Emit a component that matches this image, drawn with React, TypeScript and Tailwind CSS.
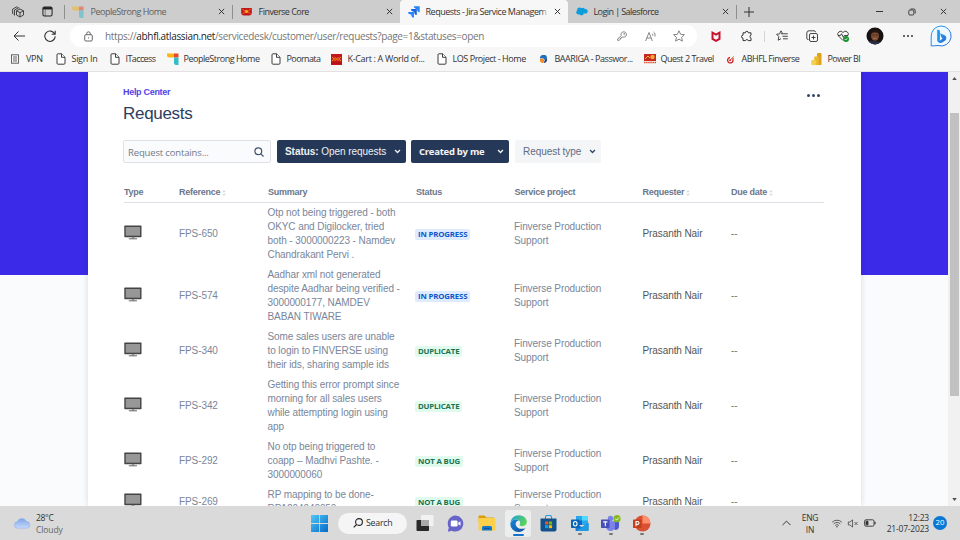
import React from "react";

type P = { className?: string };

const ui = "font-['Open_Sans','Noto_Sans',sans-serif]";

/* ---------- small glyphs ---------- */
const X = ({ className = "" }: P) => (
  <svg viewBox="0 0 8 8" className={`size-[7px] shrink-0 ${className}`} fill="none" stroke="#333" strokeWidth="1.1">
    <path d="M1 1l6 6M7 1L1 7" />
  </svg>
);
const FileIcon = () => (
  <svg viewBox="0 0 10 12" className="h-3 w-[10px] shrink-0" fill="#fff" stroke="#3c3c3c" strokeWidth="1" strokeLinejoin="round">
    <path d="M2 .8h3.600L9 4.200v6a1 1 0 0 1-1 1H2a1 1 0 0 1-1-1V1.800a1 1 0 0 1 1-1z" />
    <path d="M5.500.8v3.500H9" />
  </svg>
);
const PeopleStrong = ({ className = "" }: P) => (
  <svg viewBox="0 0 12 12" className={`size-3 shrink-0 ${className}`}>
    <path d="M0 .5h7V4.500H2.500A2.500 2.500 0 0 1 0 2z" fill="#fbb316" />
    <path d="M7 .5h4.500v4H7z" fill="#e8452c" />
    <path d="M7 4.500h4.500V12H9A2 2 0 0 1 7 10z" fill="#35bccb" />
  </svg>
);
const Birla = () => (
  <svg viewBox="0 0 12 9" className="h-[8px] w-[11px] shrink-0">
    <path d="M0 0h12v6a3 3 0 0 1-3 2.500H3A3 3 0 0 1 0 6z" fill="#c3161c" />
    <circle cx="6" cy="4" r="1.900" fill="#f6a11a" />
    <path d="M1.500 1.500l2.500 1.800M10.500 1.500L8 3.300M1.500 6.500L4 5M10.500 6.500L8 5" stroke="#f6a11a" strokeWidth=".8" />
  </svg>
);
const KCart = () => (
  <svg viewBox="0 0 12 12" className="size-[11px] shrink-0">
    <rect width="12" height="12" fill="#c4161c" />
    <path d="M1 3.500l3 2L1 7.500M11 3.500l-3 2 3 2M4 3.500l2 2 2-2M4 7.500l2-2 2 2" stroke="#f0a020" fill="none" />
    <path d="M0 10h12" stroke="#a81015" />
  </svg>
);
const Baariga = () => (
  <svg viewBox="0 0 10 10" className="size-[9px] shrink-0">
    <path d="M1 4A4 4 0 0 1 9 3.500L7 6 4.500 3.500z" fill="#1f6fc0" />
    <path d="M1 4.500L4.500 3.800 6 6 4.500 9A4 4 0 0 1 1 4.500z" fill="#f28a1c" />
    <path d="M9 4a4.200 4.200 0 0 1-4 5l1.500-3z" fill="#17386f" />
  </svg>
);
const Quest = () => (
  <svg viewBox="0 0 12 10" className="h-[10px] w-3 shrink-0">
    <rect y="0" width="12" height="7" fill="#c5281c" />
    <circle cx="8.500" cy="3" r="2.200" fill="#f3a63a" />
    <path d="M1 5l3-3 2 2" stroke="#f7b63a" fill="none" />
    <path d="M0 8.500h12" stroke="#d9502c" strokeWidth="1.400" strokeDasharray="1.500 .6" />
  </svg>
);
const Abhfl = () => (
  <svg viewBox="0 0 10 10" className="size-[9px] shrink-0" fill="none">
    <path d="M7.500 4.500A3 3 0 1 1 4.500 2.800" stroke="#d5222a" strokeWidth="1.500" />
    <path d="M4 6.500L8.500 1.500M6 4l3-.5" stroke="#e56a2c" />
    <circle cx="4.600" cy="5.700" r="1" fill="#d5222a" />
  </svg>
);
const PowerBI = () => (
  <svg viewBox="0 0 11 12" className="h-3 w-[11px] shrink-0">
    <rect x="6" y="0" width="4.500" height="12" rx=".8" fill="#dca21c" />
    <rect x="3.200" y="3.500" width="4.500" height="8.500" rx=".8" fill="#ecb92a" />
    <rect x=".3" y="7" width="4.500" height="5" rx=".8" fill="#f5d050" />
  </svg>
);
const VpnIcon = () => (
  <svg viewBox="0 0 10 10" className="size-[10px] shrink-0" fill="none" stroke="#555" strokeWidth=".9">
    <rect x="1.500" y=".8" width="7" height="8.400" />
    <path d="M3 3h4M3 5h4M3 7h4" />
  </svg>
);
const Jira = () => (
  <svg viewBox="0 0 12 12" className="size-3 shrink-0">
    <path d="M5.800.3H11.700V6.200A2.600 2.600 0 0 1 9.100 3.900V2.900H8.200A2.600 2.600 0 0 1 5.800.3z" fill="#2684ff" />
    <path d="M2.900 3.100H8.800V9A2.600 2.600 0 0 1 6.200 6.700V5.700H5.300A2.600 2.600 0 0 1 2.900 3.100z" fill="#1565e0" />
    <path d="M0 5.900H5.900V11.800A2.600 2.600 0 0 1 3.300 9.500V8.500H2.400A2.600 2.600 0 0 1 0 5.900z" fill="#2684ff" />
  </svg>
);
const Salesforce = () => (
  <svg viewBox="0 0 12 9" className="h-[9px] w-3 shrink-0" fill="#0d9dda">
    <circle cx="3.600" cy="3" r="2.500" />
    <circle cx="6.800" cy="3" r="2.200" />
    <circle cx="9.300" cy="4.300" r="2.400" />
    <circle cx="2.600" cy="5.200" r="2.300" />
    <circle cx="5.500" cy="6" r="2.400" />
  </svg>
);

/* ---------- browser chrome ---------- */
function Tab({ icon, label, width, className, tracking }: { icon: React.ReactNode; label: string; width: string; className?: string; tracking: string }) {
  return (
    <div className={`flex h-full shrink-0 items-center pl-2 pr-[7px] ${width} ${className ?? ""}`}>
      <div className="flex w-[17.5px] shrink-0 items-center">{icon}</div>
      <span className={`min-w-0 flex-1 overflow-hidden whitespace-nowrap ${tracking}`}>{label}</span>
      <X className="ml-1" />
    </div>
  );
}
const Sep = () => <div className="h-[14px] w-px shrink-0 bg-[#8f8f8f]" />;

function TabBar() {
  return (
    <div className="flex h-[23px] shrink-0 items-center bg-[#cdcdcd] text-[9px] text-[#333]">
      <div className="flex w-16 shrink-0 items-center pl-3">
        <svg viewBox="0 0 12 12" className="size-3" fill="none" stroke="#333" strokeWidth=".9" strokeLinejoin="round">
          <path d="M4.500 4.800L8 3l3.500 1.800v4.200L8 11 4.500 9zM4.500 4.800L8 6.600l3.500-1.800M8 6.600V11" />
          <path d="M3 9.500L2.500 9.200V4L6.500 1.800l1 .4M1.500 8.200L.6 7.600V3.200L4.600.9l1.200.5" />
        </svg>
        <svg viewBox="0 0 12 12" className="ml-[18px] size-[11px]" fill="none" stroke="#222" strokeWidth="1.100">
          <rect x="1" y="1" width="10" height="10" rx="1.600" />
          <path d="M1 2.500h10" strokeWidth="2.600" />
          <path d="M3.500 4v7" strokeWidth=".5" />
        </svg>
      </div>
      <Sep />
      <Tab icon={<PeopleStrong className="-ml-px opacity-50" />} label="PeopleStrong Home" width="w-[167px]" className="text-[#606060]" tracking="tracking-[-0.5px]" />
      <Sep />
      <Tab icon={<Birla />} label="Finverse Core" width="w-[167px]" tracking="tracking-[-0.52px]" />
      <div className="relative flex h-full w-[168px] shrink-0 items-center rounded-t-[4px] bg-[#f7f7f7]">
        <Tab icon={<Jira />} label="Requests - Jira Service Managem" width="w-[168px]" tracking="tracking-[-0.48px]" />
        <div className="absolute right-[19px] h-4 w-2 bg-linear-to-r from-[#f7f7f700] to-[#f7f7f7]" />
      </div>
      <Tab icon={<Salesforce />} label="Login | Salesforce" width="w-[168px]" tracking="tracking-[-0.58px]" />
      <Sep />
      <svg viewBox="0 0 10 10" className="ml-[7px] size-[10px]" stroke="#333" strokeWidth="1">
        <path d="M5 0v10M0 5h10" />
      </svg>
      <div className="ml-auto flex items-center pr-[13px]">
        <div className="mr-px h-px w-[7px] bg-[#333]" />
        <svg viewBox="0 0 8 8" className="ml-6 size-2" fill="none" stroke="#333" strokeWidth=".9">
          <rect x=".8" y="2" width="5" height="5" rx="1" />
          <path d="M2.500 1h3.300A1.400 1.400 0 0 1 7.200 2.400V5.500" />
        </svg>
        <X className="ml-6 size-2" />
      </div>
    </div>
  );
}

function Toolbar() {
  return (
    <div className="flex h-[27px] shrink-0 items-center bg-[#f7f7f7] pb-px">
      <svg viewBox="0 0 12 10" className="ml-[13px] h-[10px] w-3" fill="none" stroke="#333" strokeWidth="1">
        <path d="M12 5H1M5.500.5L1 5l4.500 4.500" />
      </svg>
      <svg viewBox="0 0 12 12" className="ml-[19px] size-3" fill="none" stroke="#333" strokeWidth="1.100">
        <path d="M10.800 4.200A5.200 5.200 0 1 0 11.200 6.200M11.200.8V4.300H7.700" />
      </svg>
      <div className="ml-[14px] flex h-[22px] w-[627px] items-center rounded-full bg-white pl-[14px]">
        <svg viewBox="0 0 10 12" className="h-[11px] w-[9px] shrink-0" fill="none" stroke="#555" strokeWidth="1">
          <rect x=".8" y="4" width="8.400" height="7" rx="1.200" />
          <path d="M3 4V2.800a2 2 0 0 1 4 0V4" />
          <circle cx="5" cy="7.500" r=".6" fill="#555" stroke="none" />
        </svg>
        <span className="ml-[12px] w-[512px] whitespace-nowrap text-[10px] tracking-[-0.345px] text-[#767676]">
          https://<span className="text-[#222]">abhfl.atlassian.net</span>/servicedesk/customer/user/requests?page=1&amp;statuses=open
        </span>
        <svg viewBox="0 0 10 10" className="size-[10px] shrink-0" fill="none" stroke="#777" strokeWidth=".9">
          <path d="M4.200 4.500A2.700 2.700 0 1 1 5.700 6L5 6.600H4v1H3v1L2.300 9.300H.7V8z" />
          <circle cx="7.200" cy="2.900" r=".5" />
        </svg>
        <svg viewBox="0 0 12 11" className="ml-[18px] h-[11px] w-3 shrink-0" fill="none" stroke="#777" strokeWidth=".9">
          <path d="M.6 10L4 1.500 7.400 10M1.800 7h4.400M7 2.500c.8.500 1 1.500.7 2.300M8.500 1c1.600 1 2 2.800 1.300 4.500" />
        </svg>
        <svg viewBox="0 0 12 12" className="ml-[16px] size-3 shrink-0" fill="none" stroke="#777" strokeWidth=".9" strokeLinejoin="round">
          <path d="M6 .8l1.600 3.500 3.800.4-2.800 2.600.8 3.800L6 9.200l-3.400 1.900.8-3.800L.6 4.700l3.800-.4z" />
        </svg>
      </div>
      <svg viewBox="0 0 10 11" className="ml-[14px] h-[11px] w-[10px] shrink-0" fill="#c8102e">
        <path d="M.5 0L5 2.600 9.500 0V8.500L5 11 .5 8.500zM2.500 3.300V7.300L5 8.700l2.500-1.400V3.300L5 4.800z" fillRule="evenodd" />
      </svg>
      <svg viewBox="0 0 12 12" className="ml-[20px] size-3 shrink-0" fill="none" stroke="#333" strokeWidth="1" strokeLinejoin="round">
        <path d="M2 2.800h2.300a1.500 1.500 0 0 1 3 0H10V5.200a1.400 1.400 0 0 0 0 2.700v2.700H7.200a1.400 1.400 0 0 0-2.700 0H2V8.200a1.500 1.500 0 0 1 0-3z" />
      </svg>
      <div className="ml-[11px] h-[11px] w-px bg-[#d4d4d4]" />
      <svg viewBox="0 0 12 12" className="ml-[11px] size-3 shrink-0" fill="none" stroke="#333" strokeWidth=".9" strokeLinejoin="round">
        <path d="M6.500 3.500L5 .8 3.600 3.900.6 4.300l2.200 2.200-.6 3.700 2.800-1.500M5 3.800h6.800M6.500 6.300h5.300M7 8.800h4.800" />
      </svg>
      <svg viewBox="0 0 12 12" className="ml-[18px] size-3 shrink-0" fill="none" stroke="#333" strokeWidth=".9">
        <rect x="3.500" y="3.500" width="8" height="8" rx="1.500" />
        <path d="M7.500 5.500v4M5.500 7.500h4M2.500 9.500A1.500 1.500 0 0 1 .8 8V3A2.200 2.200 0 0 1 3 .8h5A1.500 1.500 0 0 1 9.500 2.200" />
      </svg>
      <svg viewBox="0 0 12 12" className="ml-[19px] size-3 shrink-0" fill="none" stroke="#333" strokeWidth=".9" strokeLinejoin="round">
        <path d="M6 10.500L1.300 5.800A2.700 2.700 0 0 1 6 2.500a2.700 2.700 0 0 1 4.800 3.200M1 5.500h2.500l1-1.800 1.800 3.500 1-1.700H11" />
        <circle cx="9" cy="9" r="3" fill="#17942e" stroke="none" />
        <path d="M7.700 9l1 1 1.700-1.800" stroke="#fff" strokeWidth=".8" />
      </svg>
      <svg viewBox="0 0 18 18" className="ml-[17px] size-[18px] shrink-0">
        <defs><clipPath id="face"><circle cx="9" cy="9" r="8.500" /></clipPath></defs>
        <g clipPath="url(#face)">
          <rect width="18" height="18" fill="#19110f" />
          <ellipse cx="9" cy="9" rx="4" ry="4.800" fill="#7a4b32" />
          <path d="M4.800 6.500c0-5 8.400-5 8.400 0-1-1.500-7.400-1.500-8.400 0z" fill="#211512" />
          <path d="M6.600 8h1.600M9.900 8h1.600" stroke="#2b1610" strokeWidth=".8" />
          <path d="M1 18c1-5 5-5 7-3.500 3 .5 6-1.500 8 3.500z" fill="#282f47" />
          <path d="M7.500 11.300c.8.500 2.200.5 3 0" stroke="#c29272" strokeWidth=".7" fill="none" />
        </g>
      </svg>
      <div className="ml-[19px] flex gap-[2px]">
        <div className="size-[2px] rounded-full bg-[#333]" />
        <div className="size-[2px] rounded-full bg-[#333]" />
        <div className="size-[2px] rounded-full bg-[#333]" />
      </div>
      <svg viewBox="0 0 22 22" className="ml-[16.500px] size-[22px] shrink-0">
        <defs>
          <linearGradient id="bing" x1="0" y1="0" x2="1" y2="1">
            <stop offset="0" stopColor="#27a7ef" /><stop offset="1" stopColor="#2a63d8" />
          </linearGradient>
        </defs>
        <path d="M11 1a10 10 0 1 1-3 19.500L1.200 21V11A10 10 0 0 1 11 1z" fill="#eef8ff" stroke="url(#bing)" strokeWidth="1" />
        <path d="M7.200 4.500l2.700.9v8l-.2 3-2.500-1.500z" fill="#2196e8" />
        <path d="M10 8.200l4.700 2.100a3.200 3.200 0 0 1 .5 5.200l-3 2c-1.500.8-3.700.4-4.700-1.200l-.3-1.500 2.700 1 2.600-2.300-1.300-1.400z" fill="url(#bing)" />
      </svg>
    </div>
  );
}

const bookmarks: [React.ReactNode, string, string, string][] = [
  [<VpnIcon />, "VPN", "w-[45.5px]", "tracking-[-0.3px]"],
  [<FileIcon />, "Sign In", "w-[54px]", "tracking-[-0.3px]"],
  [<FileIcon />, "ITaccess", "w-[58px]", "tracking-[-0.6px]"],
  [<PeopleStrong />, "PeopleStrong Home", "w-[103px]", "tracking-[-0.48px]"],
  [<FileIcon />, "Poornata", "w-[61px]", "tracking-[-0.6px]"],
  [<KCart />, "K-Cart : A World of...", "w-[105px]", "tracking-[-0.32px]"],
  [<FileIcon />, "LOS Project - Home", "w-[102px]", "tracking-[-0.45px]"],
  [<Baariga />, "BAARIGA - Passwor...", "w-[106px]", "tracking-[-0.45px]"],
  [<Quest />, "Quest 2 Travel", "w-[81px]", "tracking-[-0.5px]"],
  [<Abhfl />, "ABHFL Finverse", "w-[86px]", "tracking-[-0.5px]"],
  [<PowerBI />, "Power BI", "w-[50px]", "tracking-[-0.55px]"],
];

function Bookmarks() {
  return (
    <div className="flex h-[22px] shrink-0 items-center border-b border-[#e2e2e2] bg-[#f7f7f7] pb-[3px] pl-[9px] text-[9px] text-[#333]">
      {bookmarks.map(([icon, label, width, tracking]) => (
        <div key={label} className={`flex shrink-0 items-center whitespace-nowrap ${width}`}>
          <div className="flex w-[17px] shrink-0 items-center justify-center pr-[5px]">{icon}</div>
          <span className={tracking}>{label}</span>
        </div>
      ))}
    </div>
  );
}

/* ---------- requests page ---------- */
const Chevron = ({ className = "" }: P) => (
  <svg viewBox="0 0 8 5" className={`h-[5px] w-[7px] shrink-0 ${className}`} fill="none" stroke="currentColor" strokeWidth="1.500">
    <path d="M1.200.8L4 3.600 6.800.8" />
  </svg>
);
const Sort = () => (
  <svg viewBox="0 0 4 6" className="ml-[2px] h-[6px] w-1" fill="#d5d9df">
    <path d="M2 0l1.800 2.200H.2zM2 6L.2 3.800h3.600z" />
  </svg>
);
const Monitor = () => (
  <svg viewBox="0 0 18 15" className="h-[15px] w-[18px]">
    <rect x=".3" y=".6" width="17.200" height="11.600" rx=".6" fill="#444" />
    <rect x="1.700" y="2" width="14.400" height="8.700" fill="#979797" />
    <path d="M7.600 12.200h2.800v1.300H7.600z" fill="#888" />
    <path d="M4.800 13.300h8.200v1H4.800z" fill="#666" />
  </svg>
);

const rows: { id: string; lines: string[]; status: string; tone: "blue" | "green" }[] = [
  { id: "FPS-650", lines: ["Otp not being triggered - both", "OKYC and Digilocker, tried", "both - 3000000223 - Namdev", "Chandrakant Pervi ."], status: "IN PROGRESS", tone: "blue" },
  { id: "FPS-574", lines: ["Aadhar xml not generated", "despite Aadhar being verified -", "3000000177, NAMDEV", "BABAN TIWARE"], status: "IN PROGRESS", tone: "blue" },
  { id: "FPS-340", lines: ["Some sales users are unable", "to login to FINVERSE using", "their ids, sharing sample ids"], status: "DUPLICATE", tone: "green" },
  { id: "FPS-342", lines: ["Getting this error prompt since", "morning for all sales users", "while attempting login using", "app"], status: "DUPLICATE", tone: "green" },
  { id: "FPS-292", lines: ["No otp being triggered to", "coapp – Madhvi Pashte. -", "3000000060"], status: "NOT A BUG", tone: "green" },
  { id: "FPS-269", lines: ["RP mapping to be done-", "RPA204040050"], status: "NOT A BUG", tone: "green" },
];

const cols = "grid grid-cols-[55px_89px_148px_98px_128px_89px_93px]";

function RequestsPage() {
  return (
    <div className="flex min-h-0 flex-1 overflow-hidden bg-linear-to-b from-[#3b2ae8] from-[203.500px] to-[#fafbfd] to-[203.500px] font-['Liberation_Sans',Arial,sans-serif]">
      <main className="ml-[88px] h-full w-[773px] shrink-0 overflow-hidden bg-white pl-[35px] pr-[37px] shadow-[0_0_6px_rgba(30,30,80,0.15)]">
        <div className="flex items-start justify-between pt-[14px]">
          <div>
            <a className="block text-[9px] font-bold leading-3 tracking-[-0.3px] text-[#5243e9]">Help Center</a>
            <h1 className="mt-[6px] text-[17px] leading-5 tracking-[-0.3px] text-[#2c3e5d]">Requests</h1>
          </div>
          <div className="mr-[4px] mt-[8px] flex gap-[2px]">
            <div className="size-[3px] rounded-full bg-[#344563]" />
            <div className="size-[3px] rounded-full bg-[#344563]" />
            <div className="size-[3px] rounded-full bg-[#344563]" />
          </div>
        </div>
        <div className="mt-4 flex h-[23px] items-stretch">
          <div className="flex w-[148px] items-center justify-between rounded-[2px] border border-[#dfe1e6] bg-[#fafbfc] pl-[4px] pr-[6px]">
            <span className={`pt-[3px] text-[9.500px] tracking-[-0.15px] text-[#707a8b] ${ui}`}>Request contains...</span>
            <svg viewBox="0 0 10 10" className="size-[10px]" fill="none" stroke="#44546f" strokeWidth="1.200">
              <circle cx="4.300" cy="4.300" r="3.400" /><path d="M6.800 6.800l2.700 2.700" />
            </svg>
          </div>
          <div className="ml-[6px] flex w-[129px] items-center justify-between rounded-[2px] bg-[#253858] pl-2 pr-[5px] text-[10px] text-[#eef0f3]">
            <span className="whitespace-nowrap tracking-[-0.05px]"><b>Status:</b> Open requests</span><Chevron />
          </div>
          <div className="ml-[5px] flex w-[98px] items-center justify-between rounded-[2px] bg-[#253858] pl-2 pr-[5px] text-[9.500px] font-bold text-[#f4f5f7]">
            <span className={`pt-[2px] tracking-[-0.26px] ${ui}`}>Created by me</span><Chevron />
          </div>
          <div className="ml-[6px] flex w-[86px] items-center justify-between rounded-[2px] bg-[#f4f5f7] pl-2 pr-[5px] text-[10px] text-[#5e6c84]">
            <span className="tracking-[-0.05px]">Request type</span><Chevron className="text-[#344563]" />
          </div>
        </div>
        <div className="ml-px w-[700px]">
          <div className={`${cols} mt-[21px] h-[19px] items-center border-b border-[#dcdfe5] pb-px text-[9px] font-bold tracking-[-0.25px] text-[#6b778c]`}>
            <span>Type</span>
            <span className="flex items-center">Reference<Sort /></span>
            <span>Summary</span>
            <span>Status</span>
            <span className="pl-[0.500px]">Service project</span>
            <span className="flex items-center pl-[0.500px]">Requester<Sort /></span>
            <span className="flex items-center">Due date<Sort /></span>
          </div>
          {rows.map((r) => (
            <div key={r.id} className={`${cols} items-center py-[3px] text-[10px] leading-[14px] tracking-[-0.09px] text-[#7a869a]`}>
              <div className="pb-[3px]"><Monitor /></div>
              <span>{r.id}</span>
              <div className="-ml-[0.500px] whitespace-nowrap">
                {r.lines.map((l) => <div key={l}>{l}</div>)}
              </div>
              <div className="-ml-px flex pt-px">
                <span className={`rounded-[2px] px-[3px] text-[7.800px] font-bold leading-[11px] tracking-[-0.15px] ${ui} ${r.tone === "blue" ? "bg-[#deebff] text-[#0c55cc]" : "bg-[#e0fbee] text-[#177453]"}`}>{r.status}</span>
              </div>
              <div>Finverse Production<br />Support</div>
              <span className="pl-[0.500px] text-[#555]">Prasanth Nair</span>
              <span className="text-[#777]">--</span>
            </div>
          ))}
        </div>
      </main>
      <div className="ml-auto flex h-full w-3 flex-col items-center bg-[#f1f1f1]">
        <svg viewBox="0 0 6 4" className="mt-[5px] h-[3px] w-[5px] shrink-0" fill="#505050"><path d="M0 4l3-4 3 4z" /></svg>
        <div className="mt-[33px] h-[283px] w-[9px] shrink-0 bg-[#c1c1c1]" />
        <svg viewBox="0 0 6 4" className="mb-[5px] mt-auto h-[3px] w-[5px] shrink-0" fill="#505050"><path d="M0 0l3 4 3-4z" /></svg>
      </div>
    </div>
  );
}

/* ---------- taskbar ---------- */
const Running = () => <div className="mt-[1px] h-[2px] w-1 rounded-full bg-[#777]" />;

function Taskbar() {
  return (
    <div className="flex h-[34px] shrink-0 items-center bg-[#d9dad9] text-[#333]">
      <svg viewBox="0 0 18 12" className="ml-[14px] h-3 w-[17px]">
        <defs><linearGradient id="cloud" x1="0" y1="0" x2="0" y2="1"><stop offset="0" stopColor="#7ea5ea" /><stop offset="1" stopColor="#c6dafa" /></linearGradient></defs>
        <path d="M4 11.500a3.400 3.400 0 0 1-.4-6.800A5 5 0 0 1 13 4.400a3.600 3.600 0 0 1 1 7.100z" fill="url(#cloud)" stroke="#84a9ea" strokeWidth=".5" />
      </svg>
      <div className="ml-[5px] w-[274px] pt-px text-[8.500px] leading-[11.500px]">
        <div className="tracking-[-0.300px]">28°C</div>
        <div className="tracking-[-0.1px] text-[#666]">Cloudy</div>
      </div>
      <svg viewBox="0 0 18 18" className="ml-[1px] size-[17px] shrink-0">
        <defs><linearGradient id="win" x1="0" y1="0" x2="1" y2="1"><stop offset="0" stopColor="#4fc8f6" /><stop offset="1" stopColor="#0669c9" /></linearGradient></defs>
        <path d="M0 0h8.600v8.600H0zM9.400 0H18v8.600H9.400zM0 9.400h8.600V18H0zM9.400 9.400H18V18H9.400z" fill="url(#win)" />
      </svg>
      <div className="ml-[10px] flex h-[21px] w-[69px] shrink-0 items-center rounded-full bg-[#f5f5f5] pl-[15px] text-[8.800px] tracking-[-0.25px]">
        <svg viewBox="0 0 10 10" className="mr-[3px] size-[10px]" fill="none" stroke="#222" strokeWidth="1.100">
          <circle cx="6" cy="4" r="3.400" /><path d="M3.600 6.500L.7 9.400" />
        </svg>
        <span className="pt-[2px]">Search</span>
      </div>
      <svg viewBox="0 0 18 16" className="ml-[9px] h-4 w-[18px] shrink-0">
        <rect x="5" y="0" width="12.500" height="11" rx=".8" fill="#f2f2f2" />
        <rect x=".5" y="5" width="12.500" height="11" rx=".8" fill="#292929" />
        <path d="M5 5h8v6H5z" fill="#aaa" />
      </svg>
      <svg viewBox="0 0 17 17" className="ml-[13px] size-[17px] shrink-0">
        <path d="M8.500.5a8 8 0 1 1-3.700 15.200L.8 16.700l1-4.200A8 8 0 0 1 8.500.5z" fill="#6863c8" />
        <rect x="3.800" y="5.500" width="6.800" height="6" rx="1.300" fill="#fff" />
        <path d="M11.200 7.700l2.300-1.500v4.600l-2.300-1.500z" fill="#fff" />
      </svg>
      <svg viewBox="0 0 18 16" className="ml-[14px] h-4 w-[18px] shrink-0">
        <path d="M.5 1.500A1 1 0 0 1 1.500.5h5l2 2H16v4H.5z" fill="#dc9c10" />
        <rect x=".5" y="3" width="17" height="12.500" rx="1" fill="#fcd04b" />
        <path d="M4 15.500v-3a1.500 1.500 0 0 1 1.500-1.500h7a1.500 1.500 0 0 1 1.500 1.500v3z" fill="#1376ca" />
        <path d="M6 13.500h6" stroke="#0b559d" />
      </svg>
      <div className="ml-[9px] flex h-[27px] w-[26px] shrink-0 flex-col items-center rounded-[3px] bg-[#eceded] pt-[5px]">
        <svg viewBox="0 0 18 18" className="size-[17px] shrink-0">
          <defs>
            <linearGradient id="edgeTop" x1="0" y1="0" x2="1" y2=".4"><stop offset="0" stopColor="#1a9fe0" /><stop offset="1" stopColor="#5bd35c" /></linearGradient>
            <linearGradient id="edgeLow" x1="0" y1="0" x2="1" y2="1"><stop offset="0" stopColor="#1688da" /><stop offset="1" stopColor="#124c9c" /></linearGradient>
          </defs>
          <path d="M.4 8.500C.8 3.700 4.500.2 9.300.2c4.600 0 8.500 3 8.500 7 0 3-2.200 4.600-4.700 4.600-2 0-3.100-.8-3-1.500.1-.6.800-.8.700-2.200C10.600 6 8.500 4.700 6 4.700 3.500 4.700 1.500 6 .4 8.500z" fill="url(#edgeTop)" />
          <path d="M.3 9C1.400 6 3.600 4.700 6 4.700c1.200 0 2.400.3 3.300 1-2.600.4-3.800 2.500-3.200 4.800.8 3 4.500 5.300 10.200 3.600A9 9 0 0 1 9 18 8.800 8.800 0 0 1 .3 9z" fill="url(#edgeLow)" />
        </svg>
        <div className="mt-[2px] h-[2px] w-[11px] shrink-0 rounded-full bg-[#1474cc]" />
      </div>
      <svg viewBox="0 0 17 17" className="ml-[9px] size-[17px] shrink-0">
        <path d="M5.500 4V2a1.500 1.500 0 0 1 1.500-1.500h3A1.500 1.500 0 0 1 11.500 2v2" fill="none" stroke="#1e9de2" strokeWidth="1.100" />
        <path d="M.5 3.500h16v11A2 2 0 0 1 14.500 16.500h-12A2 2 0 0 1 .5 14.500z" fill="#13518d" />
        <path d="M5 6.500h3.200v3H5z" fill="#f25022" /><path d="M8.900 6.500h3.200v3H8.900z" fill="#7fba00" />
        <path d="M5 10.200h3.200v3H5z" fill="#00a4ef" /><path d="M8.900 10.200h3.200v3H8.900z" fill="#ffb900" />
      </svg>
      <div className="ml-[14px] flex w-[18px] shrink-0 flex-col items-center pt-[3px]">
        <svg viewBox="0 0 18 17" className="h-[17px] w-[18px]">
          <rect x="5" y="1" width="12" height="9" fill="#28a8ea" />
          <path d="M11 1h6v4.500h-6z" fill="#50d9ff" />
          <path d="M5 5.500h6V10H5z" fill="#0f68bd" />
          <path d="M4.500 9L11 12l6.500-4v7a1 1 0 0 1-1 1h-11a1 1 0 0 1-1-1z" fill="#137ad1" />
          <path d="M8 14.500L17.500 8v7a1 1 0 0 1-1 1h-11z" fill="#1f9be5" />
          <rect x="0" y="4.500" width="8.500" height="8.500" rx=".7" fill="#0864b8" />
          <ellipse cx="4.250" cy="8.750" rx="1.800" ry="2.200" fill="none" stroke="#fff" strokeWidth="1.100" />
        </svg>
        <Running />
      </div>
      <div className="ml-[12px] flex w-[20px] shrink-0 flex-col items-center pt-[3px]">
        <svg viewBox="0 0 20 17" className="h-[17px] w-5">
          <circle cx="9.500" cy="3.500" r="2.700" fill="#7b83eb" />
          <path d="M7 6.500h11v4.500a4 4 0 0 1-4 4z" fill="#5059c9" />
          <path d="M5 6.500h9v5a4.500 4.500 0 0 1-9 0z" fill="#7b83eb" />
          <rect x="0" y="4.500" width="8.500" height="8.500" rx=".7" fill="#464eb8" />
          <path d="M2.200 6.900h4.200M4.300 6.900v4.300" stroke="#fff" strokeWidth="1.100" />
          <circle cx="16" cy="3.700" r="3.600" fill="#86ba1c" />
          <path d="M14.300 3.800l1.300 1.300L18 2.500" stroke="#fff" fill="none" strokeWidth=".9" />
        </svg>
        <Running />
      </div>
      <div className="ml-[12px] flex w-[18px] shrink-0 flex-col items-center pt-[3px]">
        <svg viewBox="0 0 18 17" className="h-[17px] w-[18px]">
          <circle cx="9.500" cy="8.500" r="8" fill="#d95035" />
          <path d="M9.500.5a8 8 0 0 1 8 8h-8z" fill="#ff8f6b" />
          <rect x="0" y="4.500" width="8.500" height="8.500" rx=".7" fill="#c43e1c" />
          <path d="M3 11.200V6.500h1.500a1.400 1.400 0 0 1 0 2.900H3" stroke="#fff" fill="none" strokeWidth="1.100" />
        </svg>
        <Running />
      </div>
      <div className="ml-auto flex items-center pr-[13px] text-[8.500px] leading-[11.500px]">
        <svg viewBox="0 0 10 6" className="h-[6px] w-[9px]" fill="none" stroke="#333" strokeWidth="1.100"><path d="M.6 5.300L5 .9l4.400 4.400" /></svg>
        <div className="ml-[10px] w-[18px] pt-px text-center tracking-[-0.2px]">ENG<br />IN</div>
        <svg viewBox="0 0 12 10" className="ml-[12px] h-[9px] w-3" fill="none" stroke="#444" strokeWidth=".9">
          <path d="M.6 3.600a7.600 7.600 0 0 1 10.800 0M2.300 5.400a5.200 5.200 0 0 1 7.400 0M4 7.200a2.800 2.800 0 0 1 4 0" /><circle cx="6" cy="8.700" r=".8" fill="#444" stroke="none" />
        </svg>
        <svg viewBox="0 0 12 10" className="ml-[4px] h-[9px] w-3" fill="none" stroke="#444" strokeWidth=".9">
          <path d="M.8 3.400h1.800L5.500 1v8L2.600 6.600H.8zM7.800 3.400L11 6.600M11 3.400L7.800 6.600" />
        </svg>
        <svg viewBox="0 0 12 8" className="ml-[5px] h-[8px] w-3" fill="none" stroke="#333" strokeWidth=".9">
          <rect x=".6" y=".8" width="9.400" height="6.400" rx="1.400" /><path d="M2 2.200h2v3.600H2z" fill="#333" /><path d="M11 2.800v2.400" strokeWidth="1.200" />
        </svg>
        <div className="ml-[10px] w-[43px] whitespace-nowrap text-right tracking-[-0.2px]">12:23<br />21-07-2023</div>
        <div className="ml-[4px] flex size-[14px] items-center justify-center rounded-full bg-[#0878d4] text-[7.800px] text-white">20</div>
      </div>
    </div>
  );
}

export default function App() {
  return (
    <div className={`flex h-[540px] w-[960px] flex-col overflow-hidden bg-white ${ui}`}>
      <TabBar />
      <Toolbar />
      <Bookmarks />
      <RequestsPage />
      <Taskbar />
    </div>
  );
}
